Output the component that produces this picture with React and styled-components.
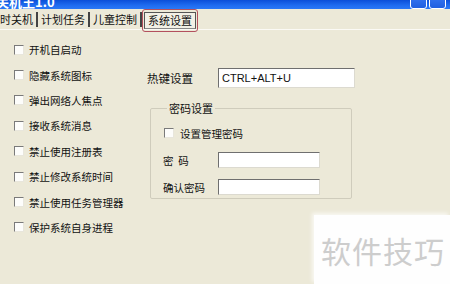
import styled, { createGlobalStyle } from "styled-components";

const GlobalStyle = createGlobalStyle`
  html, body {
    margin: 0;
    padding: 0;
    background: #ece9d8;
  }
  body {
    width: 450px;
    height: 284px;
    overflow: hidden;
    font-family: "Noto Sans CJK SC", "Liberation Sans", sans-serif;
    font-size: 10.5px;
    color: #111;
  }
`;

const Window = styled.div`
  position: relative;
  width: 450px;
  height: 284px;
  overflow: hidden;
  background: #ece9d8;
  display: flex;
  flex-direction: column;
`;

const TitleBar = styled.div`
  height: 9px;
  flex: none;
  display: flex;
  justify-content: space-between;
  overflow: hidden;
  background: linear-gradient(#0b4fd8, #1f6cf0 60%, #2a78f5);
`;

const TitleText = styled.span`
  color: #fff;
  font-weight: bold;
  font-size: 13px;
  line-height: 13px;
  margin-top: -5px;
  margin-left: -4px;
`;

const WinButtons = styled.div`
  display: flex;
  gap: 2px;
  margin-top: -8px;
  margin-right: 4px;
`;

const WinButton = styled.div`
  width: 15px;
  height: 15px;
  border: 1px solid #fff;
  border-radius: 3px;
  background: linear-gradient(#3d7df7, #1f5fe0);
`;

const TabStrip = styled.div`
  height: 19px;
  flex: none;
  display: flex;
  align-items: center;
  border-bottom: 1px solid #fbfaf5;
  padding-top: 1px;
  font-size: 11px;
`;

const Tab = styled.div`
  display: flex;
  align-items: center;
  height: 15px;
  padding: 0 3px;
  margin-left: ${(p) => p.$ml || 0}px;
  border-right: 2px solid #444;
  line-height: 15px;
  white-space: nowrap;
`;

const ActiveWrap = styled.div`
  margin-left: 0;
  margin-top: 1px;
  padding: 2px 1px;
  border: 1.5px solid #b3505e;
  border-radius: 3px;
`;

const ActiveTab = styled.div`
  height: 15px;
  line-height: 15px;
  padding: 0 3px;
  border: 1px solid #555;
  border-bottom-color: #888;
  background: #f2f0e6;
`;

const Body = styled.div`
  display: flex;
  flex: 1;
`;

const LeftCol = styled.div`
  width: 133px;
  padding: 7px 0 0 14px;
  display: flex;
  flex-direction: column;
`;

const CheckRow = styled.label`
  display: flex;
  align-items: center;
  gap: 5px;
  height: 25.4px;
  white-space: nowrap;
`;

const Box = styled.span`
  width: 8px;
  height: 8px;
  flex: none;
  background: #fdfdfb;
  border-top: 1px solid #7a7a7a;
  border-left: 1px solid #7a7a7a;
  border-bottom: 1px solid #e8e6dc;
  border-right: 1px solid #e8e6dc;
`;

const RightCol = styled.div`
  padding: 38px 0 0 0;
  display: flex;
  flex-direction: column;
`;

const HotkeyRow = styled.div`
  display: flex;
  align-items: center;
  height: 20px;
  font-size: 11.5px;
`;

const Label = styled.span`
  width: ${(p) => p.$w}px;
  flex: none;
  white-space: pre;
`;

const Field = styled.div`
  width: ${(p) => p.$w}px;
  height: ${(p) => p.$h}px;
  flex: none;
  box-sizing: border-box;
  background: #fff;
  border-top: 1px solid #6f6f6f;
  border-left: 1px solid #6f6f6f;
  border-bottom: 1px solid #dcdad0;
  border-right: 1px solid #dcdad0;
  font-family: "Liberation Sans", "Noto Sans", sans-serif;
  font-size: 11px;
  line-height: ${(p) => p.$h - 2}px;
  padding-left: 3px;
  color: #111;
`;

const Group = styled.fieldset`
  margin: 14px 0 0 3px;
  width: 202px;
  height: 97px;
  box-sizing: border-box;
  border: 1px solid #cfccbc;
  border-radius: 2px;
  padding: 16px 0 0 12px;
  display: flex;
  flex-direction: column;
`;

const Legend = styled.legend`
  padding: 0 2px;
  margin-left: 4px;
  line-height: 12px;
  font-size: 11px;
`;

const GroupCheck = styled.label`
  display: flex;
  align-items: center;
  gap: 6px;
  height: 12px;
  margin-top: -3px;
  margin-left: 1px;
`;

const PwdRow = styled.div`
  display: flex;
  align-items: center;
  margin-top: ${(p) => p.$mt}px;
`;

const Watermark = styled.div`
  position: absolute;
  left: 314px;
  top: 215px;
  width: 136px;
  height: 69px;
  background: #fefefe;
  box-shadow: -2px -2px 4px rgba(255, 255, 255, 0.7);
  display: flex;
  align-items: center;
  justify-content: center;
  color: #cdcdcd;
  font-size: 30px;
  letter-spacing: 1px;
  padding-left: 2px;
  box-sizing: border-box;
`;

const leftItems = [
  "开机自启动",
  "隐藏系统图标",
  "弹出网络人焦点",
  "接收系统消息",
  "禁止使用注册表",
  "禁止修改系统时间",
  "禁止使用任务管理器",
  "保护系统自身进程",
];

export default function App() {
  return (
    <>
      <GlobalStyle />
      <Window>
        <TitleBar>
          <TitleText>关机王1.0</TitleText>
          <WinButtons>
            <WinButton />
            <WinButton />
          </WinButtons>
        </TitleBar>
        <TabStrip>
          <Tab $ml={-3}>时关机</Tab>
          <Tab>计划任务</Tab>
          <Tab>儿童控制</Tab>
          <ActiveWrap>
            <ActiveTab>系统设置</ActiveTab>
          </ActiveWrap>
        </TabStrip>
        <Body>
          <LeftCol>
            {leftItems.map((t) => (
              <CheckRow key={t}>
                <Box />
                {t}
              </CheckRow>
            ))}
          </LeftCol>
          <RightCol>
            <HotkeyRow>
              <Label $w={71}>热键设置</Label>
              <Field $w={137} $h={20}>CTRL+ALT+U</Field>
            </HotkeyRow>
            <Group>
              <Legend>密码设置</Legend>
              <GroupCheck>
                <Box />
                设置管理密码
              </GroupCheck>
              <PwdRow $mt={13}>
                <Label $w={55}>{"密  码"}</Label>
                <Field $w={102} $h={16} />
              </PwdRow>
              <PwdRow $mt={11}>
                <Label $w={55}>确认密码</Label>
                <Field $w={102} $h={16} />
              </PwdRow>
            </Group>
          </RightCol>
        </Body>
        <Watermark>软件技巧</Watermark>
      </Window>
    </>
  );
}
